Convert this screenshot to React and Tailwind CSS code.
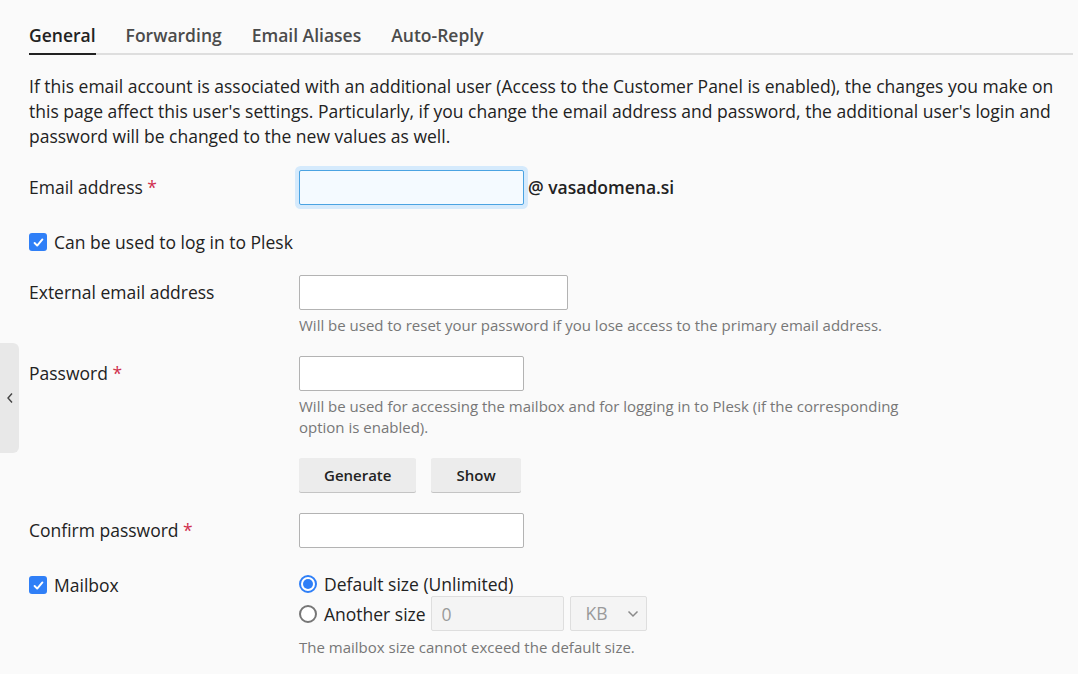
import React from 'react';

const Check = () => (
  <span className="flex h-[18px] w-[18px] shrink-0 items-center justify-center rounded-[3px] bg-[#2f7ff7]">
    <svg className="h-[13px] w-[13px]" viewBox="0 0 16 16" fill="none" stroke="white" strokeWidth="2.4" strokeLinecap="round" strokeLinejoin="round">
      <path d="M3.2 8.6l3.2 3.2 6.4-7.6" />
    </svg>
  </span>
);

const Radio = ({ checked }) => (
  checked ? (
    <span className="flex h-[18px] w-[18px] shrink-0 items-center justify-center rounded-full border-2 border-[#2f7ff7] bg-white">
      <span className="h-[10px] w-[10px] rounded-full bg-[#2f7ff7]" />
    </span>
  ) : (
    <span className="h-[18px] w-[18px] shrink-0 rounded-full border-2 border-[#767676] bg-white" />
  )
);

const Req = () => <span className="text-[#d0304e]"> *</span>;

const Field = ({ label, required, children, className = '' }) => (
  <div className={`grid grid-cols-[270px_1fr] ${className}`}>
    <div className="pt-[5px] leading-6">
      {label}
      {required && <Req />}
    </div>
    <div>{children}</div>
  </div>
);

const TextInput = ({ width }) => (
  <input type="text" className={`block h-[35px] ${width} rounded-[2px] border border-[#b3b3b3] bg-white px-2 outline-none`} />
);

const Hint = ({ children, className = '' }) => (
  <p className={`text-[15px] leading-[21px] text-[#777] ${className}`}>{children}</p>
);

const Btn = ({ children }) => (
  <button className="h-[34px] rounded-[2px] bg-[#ececec] px-[25px] text-[15px] font-semibold text-[#232323] shadow-[0_1px_0_#c4c4c4]">
    {children}
  </button>
);

export default function App() {
  const tabs = ['General', 'Forwarding', 'Email Aliases', 'Auto-Reply'];
  return (
    <div className="relative min-h-screen bg-[#fafafa] text-[17.5px] text-[#222]" style={{ fontFamily: '"Open Sans", "Liberation Sans", sans-serif' }}>
      <div className="absolute left-0 top-[343px] flex h-[110px] w-[19px] items-center justify-center rounded-r-[6px] bg-[#e8e8e8]">
        <svg className="h-[12px] w-[8px]" viewBox="0 0 8 12" fill="none" stroke="#444" strokeWidth="1.4">
          <path d="M6 1.5L2 6l4 4.5" />
        </svg>
      </div>

      <div className="pl-[29px] pr-[5px]">
        <div className="flex gap-[30px] border-b-2 border-[#dedede] pt-[23px]">
          {tabs.map((t, i) => (
            <div
              key={t}
              className={`-mb-[2px] pb-[6px] text-[17.5px] font-semibold leading-6 ${i === 0 ? 'border-b-2 border-[#222] text-[#222]' : 'border-b-2 border-transparent text-[#4b4b4b]'}`}
            >
              {t}
            </div>
          ))}
        </div>

        <p className="mt-[19px] pr-[10px] leading-[25px]">
          If this email account is associated with an additional user (Access to the Customer Panel is enabled), the changes you make on this page affect this user's settings. Particularly, if you change the email address and password, the additional user's login and password will be changed to the new values as well.
        </p>

        <Field label="Email address" required className="mt-[21px]">
          <div className="flex items-center gap-[4px]">
            <input type="text" className="block h-[35px] w-[225px] rounded-[2px] border border-[#4aa3e2] bg-[#f4faff] px-2 shadow-[0_0_0_4px_#d5eafc] outline-none" />
            <span className="font-semibold">@ vasadomena.si</span>
          </div>
        </Field>

        <label className="mt-[25px] flex items-center gap-[7px] leading-6">
          <Check />
          Can be used to log in to Plesk
        </label>

        <Field label="External email address" className="mt-[21px]">
          <TextInput width="w-[269px]" />
          <Hint className="mt-[5px]">Will be used to reset your password if you lose access to the primary email address.</Hint>
        </Field>

        <Field label="Password" required className="mt-[20px]">
          <TextInput width="w-[225px]" />
          <Hint className="mt-[5px] max-w-[610px]">Will be used for accessing the mailbox and for logging in to Plesk (if the corresponding option is enabled).</Hint>
          <div className="mt-[20px] flex gap-[15px]">
            <Btn>Generate</Btn>
            <Btn>Show</Btn>
          </div>
        </Field>

        <Field label="Confirm password" required className="mt-[21px]">
          <TextInput width="w-[225px]" />
        </Field>

        <div className="mt-[25px] grid grid-cols-[270px_1fr]">
          <label className="flex items-center gap-[7px] self-start leading-6">
            <Check />
            Mailbox
          </label>
          <div>
            <label className="-mt-[1px] flex items-center gap-[7px] leading-6">
              <Radio checked />
              Default size (Unlimited)
            </label>
            <div className="flex items-center">
              <label className="flex items-center gap-[7px] leading-6">
                <Radio />
                Another size
              </label>
              <input type="text" disabled value="0" className="ml-[5px] block h-[35px] w-[133px] rounded-[2px] border border-[#dedede] bg-[#f4f4f4] px-[10px] text-[#9a9a9a]" />
              <div className="ml-[6px] flex h-[35px] w-[77px] items-center justify-between rounded-[2px] border border-[#dedede] bg-[#f4f4f4] pl-[15px] pr-[7px] text-[#9a9a9a]">
                <span>KB</span>
                <svg className="h-[8px] w-[12px]" viewBox="0 0 12 8" fill="none" stroke="#8a8a8a" strokeWidth="1.5">
                  <path d="M1.5 1.5l4.5 4.5 4.5-4.5" />
                </svg>
              </div>
            </div>
            <Hint className="mt-[6px]">The mailbox size cannot exceed the default size.</Hint>
          </div>
        </div>
      </div>
    </div>
  );
}
